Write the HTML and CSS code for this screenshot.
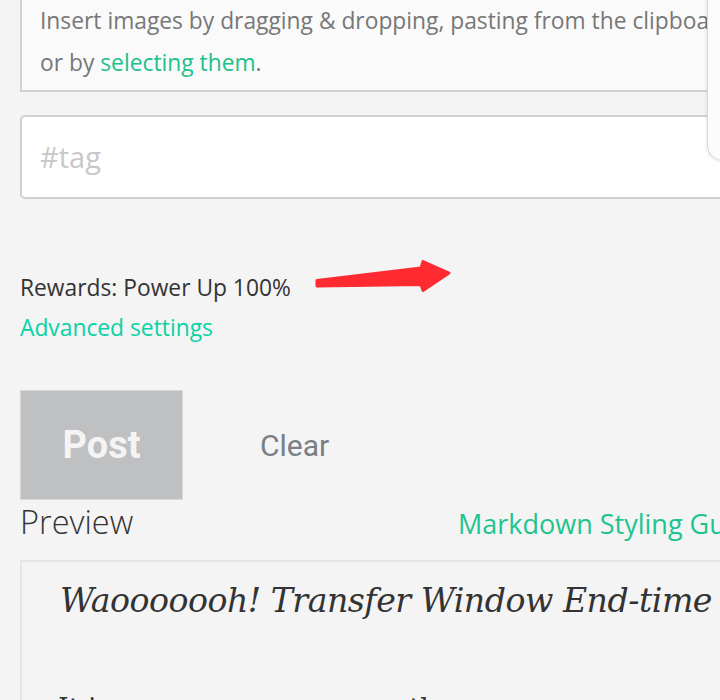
FILE: index.html
```html
<!DOCTYPE html>
<html>
<head>
<meta charset="utf-8">
<link rel="stylesheet" href="styles.css">
</head>
<body>
<div class="page">
  <div class="dropzone">
    <div class="dz-line">Insert images by dragging &amp; dropping, pasting from the clipboard,</div>
    <div class="dz-line">or by <span class="link-a">selecting them</span>.</div>
  </div>
  <div class="tag-input">#tag</div>
  <div class="rewards">Rewards: Power Up 100%</div>
  <div class="advanced">Advanced settings</div>
  <div class="actions">
    <div class="btn-post">Post</div>
    <div class="btn-clear">Clear</div>
  </div>
  <div class="preview-head">
    <div class="preview-label">Preview</div>
    <div class="md-guide">Markdown Styling Guide</div>
  </div>
  <div class="preview-box">
    <div class="preview-title">Waooooooh! Transfer Window End-time</div>
    <div class="preview-para">It is a rare summer, once the</div>
  </div>
</div>
<div class="side-panel"></div>
<svg class="arrow" viewBox="300 250 165 55" width="165" height="55">
  <path d="M317,280.5 L421,268 L423,261.5 L449,273 L423,290.5 L421,284.5 L317,286 Z" fill="#ff2b30" stroke="#ff2b30" stroke-width="3" stroke-linejoin="round"/>
</svg>
</body>
</html>
```

FILE: styles.css
```css
html, body {
  margin: 0;
  padding: 0;
  background: #f4f4f4;
  overflow: hidden;
  width: 720px;
  height: 700px;
}
body {
  position: relative;
  font-family: "Open Sans", Lato, sans-serif;
}
.page {
  width: 800px;
  padding-left: 20px;
}
.dropzone {
  background: #fafafa;
  border: 2px solid #d2d2d2;
  border-top: none;
  padding: 0 20px 6px 18px;
  color: #777;
  font-size: 22.8px;
  line-height: 42px;
  white-space: nowrap;
}
.link-a {
  color: #21c08b;
}
.tag-input {
  margin-top: 23px;
  height: 80px;
  background: #fff;
  border: 2px solid #d0d0d0;
  border-radius: 5px;
  box-sizing: content-box;
  padding-left: 18px;
  font-size: 29px;
  line-height: 80px;
  color: #c8c8c8;
}
.rewards {
  margin-top: 69px;
  font-size: 22.8px;
  line-height: 40px;
  color: #333;
}
.advanced {
  font-size: 22.8px;
  line-height: 40px;
  color: #07d3a5;
}
.actions {
  margin-top: 42px;
  display: flex;
  align-items: center;
}
.btn-post {
  width: 161px;
  height: 108px;
  background: #bfc0c1;
  border: 1px solid #d8d8d8;
  display: flex;
  align-items: center;
  justify-content: center;
  font-family: Roboto, sans-serif;
  font-weight: 700;
  font-size: 38px;
  color: #f4f4f4;
}
.btn-clear {
  margin-left: 77px;
  font-family: Roboto, sans-serif;
  font-size: 30px;
  color: #787f86;
}
.preview-head {
  display: grid;
  grid-template-columns: 438px 1fr;
  align-items: baseline;
  margin-top: 2px;
  height: 40px;
}
.preview-label {
  font-size: 32.5px;
  font-weight: 300;
  line-height: 40px;
  color: #333;
}
.md-guide {
  font-size: 27px;
  color: #1ec48f;
  white-space: nowrap;
}
.preview-box {
  margin-top: 18px;
  border-top: 2px solid #e6e6e6;
  border-left: 2px solid #e6e6e6;
  padding: 19px 0 0 38px;
  height: 300px;
}
.preview-title {
  font-family: "DejaVu Serif", serif;
  font-style: italic;
  font-size: 33.2px;
  line-height: 40px;
  color: #333;
  white-space: nowrap;
  letter-spacing: -0.5px;
}
.preview-para {
  margin-top: 68px;
  margin-left: -2px;
  font-family: "DejaVu Serif", serif;
  font-size: 27px;
  line-height: 40px;
  color: #333;
  white-space: nowrap;
}
.side-panel {
  position: absolute;
  left: 707px;
  top: -10px;
  width: 40px;
  height: 170px;
  background: #fcfcfc;
  border-left: 1px solid #d8d8d8;
  border-bottom: 1px solid #e0e0e0;
  border-bottom-left-radius: 16px;
  box-shadow: -1px 1px 3px rgba(0, 0, 0, 0.08);
}
.arrow {
  position: absolute;
  left: 300px;
  top: 250px;
}
```
